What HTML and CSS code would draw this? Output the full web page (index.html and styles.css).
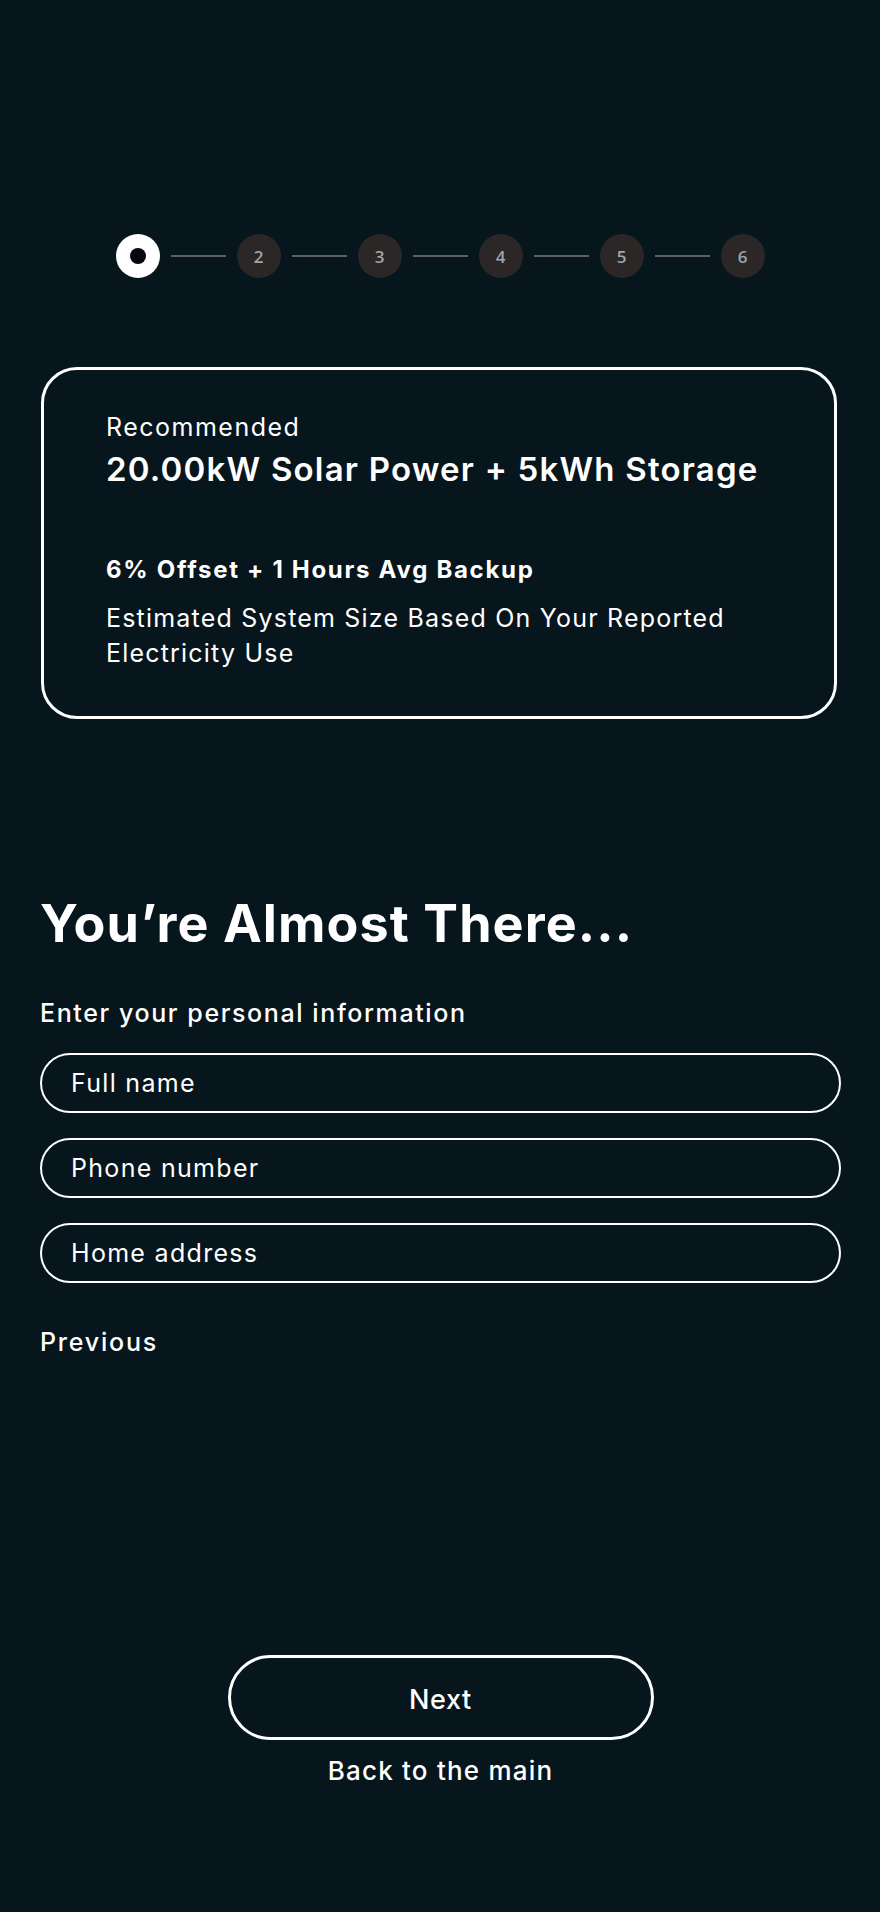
FILE: index.html
```html
<!DOCTYPE html>
<html lang="en">
<head>
<meta charset="utf-8">
<title>You're Almost There</title>
<link rel="stylesheet" href="styles.css">
</head>
<body>
<main class="page">
  <ol class="stepper">
    <li class="step step-active"><span class="dot"></span></li>
    <li class="line"></li>
    <li class="step">2</li>
    <li class="line"></li>
    <li class="step">3</li>
    <li class="line"></li>
    <li class="step">4</li>
    <li class="line"></li>
    <li class="step">5</li>
    <li class="line"></li>
    <li class="step">6</li>
  </ol>

  <section class="card">
    <p class="card-label">Recommended</p>
    <h2 class="card-title">20.00kW Solar Power + 5kWh Storage</h2>
    <p class="card-sub">6% Offset + 1 Hours Avg Backup</p>
    <p class="card-text">Estimated System Size Based On Your Reported Electricity Use</p>
  </section>

  <h1 class="heading">You’re Almost There...</h1>
  <p class="form-label">Enter your personal information</p>
  <form class="form">
    <input class="field" type="text" placeholder="Full name">
    <input class="field" type="tel" placeholder="Phone number">
    <input class="field" type="text" placeholder="Home address">
  </form>
  <a class="prev" href="#">Previous</a>

  <div class="actions">
    <button class="next" type="button">Next</button>
    <a class="back" href="#">Back to the main</a>
  </div>
</main>
</body>
</html>
```

FILE: styles.css
```css
* { box-sizing: border-box; }

html, body {
  margin: 0;
  padding: 0;
  background: #07151c;
}

body {
  font-family: "Inter", "Roboto", "Liberation Sans", sans-serif;
  color: #ffffff;
  min-height: 1912px;
}

.page {
  padding: 234px 39px 60px 40px;
  display: flex;
  flex-direction: column;
}

.stepper {
  list-style: none;
  margin: 0;
  padding: 0;
  display: flex;
  align-items: center;
  justify-content: center;
  gap: 11px;
  margin-left: -1px;
}

.step {
  width: 44px;
  height: 44px;
  border-radius: 50%;
  background: #2a2726;
  color: #9ea6ad;
  display: flex;
  align-items: center;
  justify-content: center;
  font-size: 17px;
  font-weight: 600;
  font-family: "Open Sans", "Inter", sans-serif;
}

.step-active {
  background: #ffffff;
}

.dot {
  width: 16px;
  height: 16px;
  border-radius: 50%;
  background: #0a0410;
}

.line {
  width: 55px;
  height: 2px;
  background: #5e5f60;
}

.card {
  margin-top: 89px;
  margin-left: 1px;
  margin-right: 4px;
  border: 3px solid #ffffff;
  border-radius: 36px;
  padding: 42px 30px 45px 62px;
}

.card p, .card h2 { margin: 0; }

.card-label {
  font-size: 25px;
  line-height: 30px;
  font-weight: 400;
  letter-spacing: 1.5px;
}

.card-title {
  margin-top: 7px !important;
  font-size: 33px;
  line-height: 40px;
  font-weight: 600;
  letter-spacing: 1.2px;
}

.card-sub {
  margin-top: 66px !important;
  font-size: 24px;
  line-height: 30px;
  font-weight: 700;
  letter-spacing: 1.7px;
}

.card-text {
  margin-top: 16px !important;
  font-size: 25px;
  line-height: 35px;
  font-weight: 400;
  letter-spacing: 1.2px;
}

.heading {
  margin: 175px 0 0;
  font-size: 52px;
  line-height: 60px;
  font-weight: 700;
  letter-spacing: 1.1px;
}

.form-label {
  margin: 44px 0 0;
  font-size: 25px;
  line-height: 30px;
  font-weight: 500;
  letter-spacing: 1.6px;
}

.form {
  margin-top: 25px;
  display: flex;
  flex-direction: column;
  gap: 25px;
}

.field {
  width: 100%;
  height: 60px;
  border: 2px solid #ffffff;
  border-radius: 30px;
  background: transparent;
  color: #ffffff;
  padding: 0 29px;
  font-family: inherit;
  font-size: 25px;
  letter-spacing: 1.3px;
  outline: none;
}

.field::placeholder {
  color: #ffffff;
  opacity: 1;
}

.prev {
  margin-top: 44px;
  align-self: flex-start;
  color: #ffffff;
  text-decoration: none;
  font-size: 25px;
  line-height: 30px;
  font-weight: 500;
  letter-spacing: 1.8px;
}

.actions {
  margin-top: 298px;
  display: flex;
  flex-direction: column;
  align-items: center;
}

.next {
  width: 426px;
  height: 85px;
  border: 3px solid #ffffff;
  border-radius: 43px;
  background: transparent;
  color: #ffffff;
  font-family: inherit;
  font-size: 27px;
  font-weight: 500;
  letter-spacing: 0.6px;
  padding: 4px 0 0;
  cursor: pointer;
}

.back {
  margin-top: 16px;
  color: #ffffff;
  text-decoration: none;
  font-size: 26px;
  line-height: 30px;
  font-weight: 500;
  letter-spacing: 1.2px;
}
```
